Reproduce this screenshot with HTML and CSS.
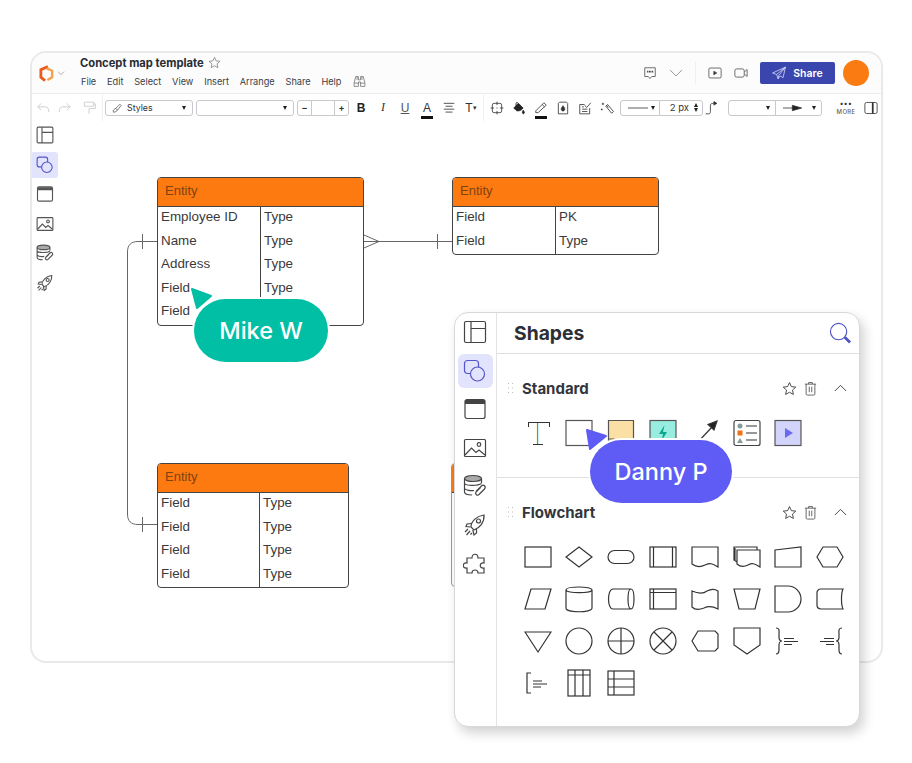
FILE: index.html
```html
<!DOCTYPE html>
<html lang="en">
<head>
  <meta charset="UTF-8">
  <title>Concept map template</title>
  <link rel="stylesheet" href="styles.css">
</head>
<body>
  <!-- Shared icons -->
  <svg class="defs" width="0" height="0">
    <symbol id="i-layout" viewBox="0 0 24 24"><rect x="1.5" y="1.5" width="21" height="21" rx="1.5"/><path d="M8 1.5V22.5M8 8.5H22.5"/></symbol>
    <symbol id="i-shapes" viewBox="0 0 24 24"><rect x="1.5" y="1.5" width="14" height="13" rx="3"/><circle cx="14.5" cy="15" r="7" fill="#e2e3fd"/></symbol>
    <symbol id="i-frame" viewBox="0 0 24 24"><rect x="2" y="2.5" width="20" height="19" rx="2"/><path d="M2 5H22" stroke-width="4"/></symbol>
    <symbol id="i-image" viewBox="0 0 24 24"><rect x="1.5" y="3.5" width="21" height="17" rx="1"/><path d="M2 19L8.500 12L13 16.500L16 14L22 19"/><circle cx="16" cy="8.500" r="1.800"/></symbol>
    <symbol id="i-data" viewBox="0 0 24 24"><ellipse cx="10" cy="4.500" rx="8.500" ry="3" fill="#aaa"/><path d="M1.500 4.500V18C1.500 20 5.500 21 9 21M18.500 4.500V9M1.500 9.500C3 12 15 12 18.500 9.500M1.500 14.500C3 16.500 8 17 11 16.500"/><path d="M13 17.500L18.500 12C20.500 10 23.500 12.500 21.500 15L16 20.500C14.500 22.500 11.500 20 13 18L17.500 13.500"/></symbol>
    <symbol id="i-rocket" viewBox="0 0 24 24"><path d="M8 14C8 8 14 3 21 2C21.500 9 17 15 11 17Z"/><circle cx="15.500" cy="8" r="2"/><path d="M8 10.500L4 11L3 13.500L7.500 14M13.500 16L13.500 20L11 22L9.800 17M5 16L2 19M7 18L3.500 22M9 20L7.500 21.500"/></symbol>
    <symbol id="i-star" viewBox="0 0 24 24"><path d="M12 2.500L15 9L22 9.800L16.800 14.500L18.200 21.500L12 18L5.800 21.500L7.200 14.500L2 9.800L9 9Z"/></symbol>
    <symbol id="i-trash" viewBox="0 0 24 24"><path d="M3 5H21M9 5V2.500H15V5M5 5V21C5 22 6 22.500 7 22.500H17C18 22.500 19 22 19 21V5M10 9V18M14 9V18"/></symbol>
    <symbol id="i-chevron" viewBox="0 0 24 24"><path d="M3 16L12 7L21 16"/></symbol>
    <symbol id="i-grip" viewBox="0 0 7 12"><path d="M1 1h1v1H1zM5 1h1v1H5zM1 5.500h1v1H1zM5 5.500h1v1H5zM1 10h1v1H1zM5 10h1v1H5z"/></symbol>
  </svg>

  <div class="stage">
    <div class="window">
      <header class="topbar">
        <svg class="logo" viewBox="0 0 16 18"><path d="M9.500 1.500L2 5V13L6.500 16.500" fill="none" stroke="#ee5a1c" stroke-width="3"/><path d="M8 3.500L14 6V13L9 16" fill="none" stroke="#f9a04a" stroke-width="2.600"/></svg>
        <svg class="icon icon-xs logo-arrow" viewBox="0 0 24 24"><path d="M3 8L12 17L21 8"/></svg>
        <div class="doc">
          <div class="doc-title">Concept map template
            <svg class="icon title-star"><use href="#i-star"/></svg>
          </div>
          <nav class="menu">
            <span>File</span><span>Edit</span><span>Select</span><span>View</span><span>Insert</span><span>Arrange</span><span>Share</span><span>Help</span>
            <svg class="icon menu-find" viewBox="0 0 24 24"><path d="M5 3H10V9H14V3H19L22 15V21H14V13H10V21H2V15ZM2.500 15H10M14 15H21.500M7.500 3V9M16.500 3V9"/></svg>
          </nav>
        </div>
        <div class="top-actions">
          <svg class="icon top-icon" viewBox="0 0 24 24"><path d="M3 3H21V18H15L12 21.500L9 18H3Z"/><path d="M8 8V11M11 8V11M13.500 8V11M16.500 8V11" stroke-width="2"/></svg>
          <svg class="icon top-icon top-chevron" viewBox="0 0 24 24"><path d="M2 7L12 17L22 7"/></svg>
          <span class="top-sep"></span>
          <svg class="icon top-icon" viewBox="0 0 24 24"><rect x="1.500" y="3.500" width="21" height="17" rx="2"/><path d="M10 9L15 12L10 15Z" fill="#333"/></svg>
          <svg class="icon top-icon" viewBox="0 0 24 24"><rect x="1.500" y="5" width="16" height="14" rx="3"/><path d="M18 10L22.500 6V18L18 14"/></svg>
          <button class="share-btn">
            <svg class="share-plane" viewBox="0 0 24 24"><path d="M23 2L1 12L8 14.500L10.500 22L14 17L19 20ZM8 14.500L23 2L11 17L10.500 22"/></svg>
            Share
          </button>
          <span class="avatar"></span>
        </div>
      </header>

      <div class="toolbar">
        <span class="tool faint"><svg class="icon" viewBox="0 0 24 24"><path d="M3 10H16C20 10 22 13 22 19M3 10L9 4M3 10L9 16"/></svg></span>
        <span class="tool faint"><svg class="icon" viewBox="0 0 24 24"><path d="M21 10H8C4 10 2 13 2 19M21 10L15 4M21 10L15 16"/></svg></span>
        <span class="tool tool-paint faint"><svg class="icon" viewBox="0 0 24 24"><path d="M4 2H20V9H4ZM20 5H23V13H12V22"/></svg></span>
        <span class="tool-sep"></span>
        <div class="field field-styles">
          <svg class="icon field-brush" viewBox="0 0 24 24"><path d="M3 22C2 17 6 14 9 13L13 17C12 20 8 22 3 22ZM9 13L19 3L22 6L13 17"/></svg>
          <span class="field-text">Styles</span><i class="caret"></i>
        </div>
        <div class="field field-font"><i class="caret"></i></div>
        <div class="stepper"><span>−</span><b></b><span>+</span></div>
        <span class="tool tool-first tool-text tool-bold">B</span>
        <span class="tool tool-text tool-italic">I</span>
        <span class="tool tool-text tool-under">U</span>
        <span class="tool tool-text tool-color">A</span>
        <span class="tool"><svg class="icon" viewBox="0 0 24 24"><path d="M3 4H21M6 9H18M3 14H21M6 19H18"/></svg></span>
        <span class="tool tool-text tool-size">T<small>▾</small></span>
        <span class="tool-sep tool-sep-b"></span>
        <span class="tool"><svg class="icon" viewBox="0 0 24 24"><rect x="4" y="4" width="16" height="16" rx="3"/><path d="M12 1V7M12 17V23M1 12H7M17 12H23M11 12H13"/></svg></span>
        <span class="tool"><svg class="icon icon-solid" viewBox="0 0 24 24"><path d="M3 12L11 4L19 12C16 17 9 18 7 16ZM19 16C21 18 22 20 20.500 21.500C19 22.500 17.500 21 18 19Z"/><path d="M7 9V4C7 2 10 2 10 4" fill="none" stroke="#222" stroke-width="1.500"/></svg></span>
        <span class="tool tool-pen"><svg class="icon" viewBox="0 0 24 24"><path d="M3 17L17 3L21 7L7 20H3ZM14 6L18 10"/></svg></span>
        <span class="tool"><svg class="icon" viewBox="0 0 24 24"><path d="M6 2H18L20 4V22H4V4Z"/><path d="M12 8C13.500 10.500 15 12 15 14C15 18 9 18 9 14C9 12 10.500 10.500 12 8Z" fill="#333"/></svg></span>
        <span class="tool"><svg class="icon" viewBox="0 0 24 24"><path d="M3 6H11M3 6V22H20V12M7 14H16M7 18H16M7 10H10M11 7L15 11L22 3"/></svg></span>
        <span class="tool"><svg class="icon" viewBox="0 0 24 24"><path d="M10 9L13 6L23 18L20 21ZM11 7L14 11M5 3V7M3 5H7M3 13V16M1.500 14.500H4.500"/></svg></span>
        <div class="line-group">
          <div class="line-style"><svg class="line-svg" viewBox="0 0 30 6"><path d="M0 3H30"/></svg><i class="caret"></i></div>
          <div class="line-width">2 px<span class="spin"><i class="caret caret-up"></i><i class="caret"></i></span></div>
        </div>
        <span class="tool tool-route"><svg class="icon" viewBox="0 0 24 24"><path d="M3 22H8C11 22 11 20 11 18V7C11 5 13 4 17 4"/><path d="M17 1L22 4L17 7Z" fill="#333"/></svg></span>
        <div class="line-group line-group-ends">
          <div class="end-left"><i class="caret"></i></div>
          <div class="end-right"><svg class="line-svg" viewBox="0 0 30 10"><path d="M0 5H22"/><path d="M14 1L28 5L14 9Z" fill="#222"/></svg><i class="caret"></i></div>
        </div>
        <div class="more"><span class="dots">•••</span><span>MORE</span></div>
        <span class="tool tool-side"><svg class="icon" viewBox="0 0 24 24"><rect x="1.500" y="2.500" width="21" height="19" rx="3"/><path d="M15 2.500V21.500" stroke-width="3"/></svg></span>
      </div>

      <aside class="rail">
        <span class="rail-item"><svg class="icon"><use href="#i-layout"/></svg></span>
        <span class="rail-item active"><svg class="icon"><use href="#i-shapes"/></svg></span>
        <span class="rail-item"><svg class="icon"><use href="#i-frame"/></svg></span>
        <span class="rail-item"><svg class="icon"><use href="#i-image"/></svg></span>
        <span class="rail-item"><svg class="icon"><use href="#i-data"/></svg></span>
        <span class="rail-item"><svg class="icon"><use href="#i-rocket"/></svg></span>
      </aside>
    </div>

    <!-- Diagram on the canvas -->
    <svg class="wires" width="912" height="763" viewBox="0 0 912 763">
      <path d="M157 241.500H138C131 241.500 127.500 245 127.500 252V514C127.500 521 131 524.500 138 524.500H157"/>
      <path d="M142.500 234V249M142.500 517V532"/>
      <path d="M364 241.500H452M437.500 234V249M364 235L379 241.500L364 248"/>
    </svg>

    <div class="entity entity-a">
      <div class="entity-head">Entity</div>
      <div class="entity-row"><span>Employee ID</span><span>Type</span></div>
      <div class="entity-row"><span>Name</span><span>Type</span></div>
      <div class="entity-row"><span>Address</span><span>Type</span></div>
      <div class="entity-row"><span>Field</span><span>Type</span></div>
      <div class="entity-row"><span>Field</span><span></span></div>
    </div>
    <div class="entity entity-b">
      <div class="entity-head">Entity</div>
      <div class="entity-row"><span>Field</span><span>PK</span></div>
      <div class="entity-row"><span>Field</span><span>Type</span></div>
    </div>
    <div class="entity entity-c">
      <div class="entity-head">Entity</div>
      <div class="entity-row"><span>Field</span><span>Type</span></div>
      <div class="entity-row"><span>Field</span><span>Type</span></div>
      <div class="entity-row"><span>Field</span><span>Type</span></div>
      <div class="entity-row"><span>Field</span><span>Type</span></div>
    </div>
    <div class="entity entity-d">
      <div class="entity-head"></div>
      <div class="entity-row"></div>
      <div class="entity-row"></div>
      <div class="entity-row"></div>
      <div class="entity-row"></div>
    </div>

    <!-- Floating shapes panel -->
    <section class="panel">
      <aside class="panel-rail">
        <span class="panel-item"><svg class="icon"><use href="#i-layout"/></svg></span>
        <span class="panel-item active"><svg class="icon"><use href="#i-shapes"/></svg></span>
        <span class="panel-item"><svg class="icon"><use href="#i-frame"/></svg></span>
        <span class="panel-item"><svg class="icon"><use href="#i-image"/></svg></span>
        <span class="panel-item"><svg class="icon"><use href="#i-data"/></svg></span>
        <span class="panel-item"><svg class="icon"><use href="#i-rocket"/></svg></span>
        <span class="panel-item"><svg class="icon" viewBox="0 0 24 24"><path d="M9 6C9 1 15 1 15 6H21V11C16 10 16 17 21 16V21H15C15 17 9 17 9 21H4V16C-1 17 -1 10 4 11V6Z"/></svg></span>
      </aside>
      <div class="panel-main">
        <header class="panel-head">
          <h2>Shapes</h2>
          <svg class="panel-search" viewBox="0 0 24 24"><circle cx="10" cy="10" r="8.500"/><path d="M16.500 16L22 21.500" stroke-width="3"/></svg>
        </header>

        <div class="section section-standard">
          <div class="section-head">
            <svg class="grip"><use href="#i-grip"/></svg>
            <h3>Standard</h3>
            <svg class="icon act act-star"><use href="#i-star"/></svg>
            <svg class="icon act act-trash"><use href="#i-trash"/></svg>
            <svg class="icon act act-chev"><use href="#i-chevron"/></svg>
          </div>
          <div class="shapes">
            <span class="shape shape-text">T</span>
            <span class="shape"><svg viewBox="0 0 28 28"><rect x="1" y="1.500" width="26" height="25" stroke="#555"/></svg></span>
            <span class="shape"><svg viewBox="0 0 28 28"><path d="M1.500 1.500H26.500V26.500H1.500Z" fill="#fbe0a5" stroke="#555"/><path d="M1.500 20H7V26" stroke="#555"/></svg></span>
            <span class="shape"><svg viewBox="0 0 28 28"><rect x="1" y="1.500" width="26" height="25" fill="#98ede0" stroke="#555"/><path d="M15.500 6L10 15H14L12.500 22L18 13H14Z" fill="#0aa88f" stroke="none"/></svg></span>
            <span class="shape"><svg viewBox="0 0 28 28"><path d="M5 25L22 7"/><path d="M26 2L23 11L17 5.500Z" fill="#222"/></svg></span>
            <span class="shape"><svg viewBox="0 0 28 28"><rect x="1" y="1.500" width="26" height="25" rx="2" stroke="#444"/><circle cx="7" cy="7" r="2.500" fill="#8a9a9c" stroke="none"/><rect x="4.500" y="11.500" width="5" height="5" fill="#f47216" stroke="none"/><path d="M7 19L10 24H4Z" fill="#8a9a9c" stroke="none"/><path d="M13 7H24M13 14H24M13 21H24"/></svg></span>
            <span class="shape"><svg viewBox="0 0 28 28"><rect x="1" y="1.500" width="26" height="25" fill="#d3d4fb" stroke="#555"/><path d="M11 9L19 14L11 19Z" fill="#6a6af0" stroke="none"/></svg></span>
          </div>
        </div>

        <div class="section">
          <div class="section-head">
            <svg class="grip"><use href="#i-grip"/></svg>
            <h3>Flowchart</h3>
            <svg class="icon act act-star"><use href="#i-star"/></svg>
            <svg class="icon act act-trash"><use href="#i-trash"/></svg>
            <svg class="icon act act-chev"><use href="#i-chevron"/></svg>
          </div>
          <div class="shapes">
            <span class="shape"><svg viewBox="0 0 28 28"><rect x="1" y="4" width="26" height="20"/></svg></span>
            <span class="shape"><svg viewBox="0 0 28 28"><path d="M14 4L27 14L14 24L1 14Z"/></svg></span>
            <span class="shape"><svg viewBox="0 0 28 28"><rect x="1" y="7.500" width="26" height="13" rx="6.500"/></svg></span>
            <span class="shape"><svg viewBox="0 0 28 28"><rect x="1" y="4" width="26" height="20"/><path d="M4.500 4V24M23.500 4V24"/></svg></span>
            <span class="shape"><svg viewBox="0 0 28 28"><path d="M1 4H27V24C21 20 19 20 14 22C9 24.500 5 24 1 21Z"/></svg></span>
            <span class="shape"><svg viewBox="0 0 28 28"><path d="M4 7H27V24C21 20 19 20 15 22C11 24 8 24.500 4 21ZM4 19L1 17V4H24V7M2 5V17"/></svg></span>
            <span class="shape"><svg viewBox="0 0 28 28"><path d="M1 7L27 4V24H1Z"/></svg></span>
            <span class="shape"><svg viewBox="0 0 28 28"><path d="M7 4H21L27 14L21 24H7L1 14Z"/></svg></span>

            <span class="shape"><svg viewBox="0 0 28 28"><path d="M7 4H27L21 24H1Z"/></svg></span>
            <span class="shape"><svg viewBox="0 0 28 28"><path d="M1 5V23C1 28 27 28 27 23V5M1 5C1 1 27 1 27 5C27 8.500 1 8.500 1 5Z"/></svg></span>
            <span class="shape"><svg viewBox="0 0 28 28"><path d="M6 4H24C28 4 28 24 24 24H6C0 24 0 4 6 4ZM24 4C20 4 20 24 24 24"/></svg></span>
            <span class="shape"><svg viewBox="0 0 28 28"><rect x="1" y="4" width="26" height="20"/><path d="M4.500 4V24M1 7.500H27"/></svg></span>
            <span class="shape"><svg viewBox="0 0 28 28"><path d="M1 6C8 9 12 9 16 6C20 4 24 4 27 6V24C21 21 17 21 13 23C8 25 4 25 1 22Z"/></svg></span>
            <span class="shape"><svg viewBox="0 0 28 28"><path d="M1 4H27L22 24H6Z"/></svg></span>
            <span class="shape"><svg viewBox="0 0 28 28"><path d="M1 1H14A13 13 0 0 1 14 27H1Z"/></svg></span>
            <span class="shape"><svg viewBox="0 0 28 28"><path d="M5 4H27C25 8 25 20 27 24H5C2 24 1 22 1 20V8C1 6 2 4 5 4Z"/></svg></span>

            <span class="shape"><svg viewBox="0 0 28 28"><path d="M1 5H27L14 25Z"/></svg></span>
            <span class="shape"><svg viewBox="0 0 28 28"><circle cx="14" cy="14" r="13"/></svg></span>
            <span class="shape"><svg viewBox="0 0 28 28"><circle cx="14" cy="14" r="13"/><path d="M14 1V27M1 14H27"/></svg></span>
            <span class="shape"><svg viewBox="0 0 28 28"><circle cx="14" cy="14" r="13"/><path d="M5 5L23 23M23 5L5 23"/></svg></span>
            <span class="shape"><svg viewBox="0 0 28 28"><path d="M7 4H24L27 7V21L24 24H7L1 14Z"/></svg></span>
            <span class="shape"><svg viewBox="0 0 28 28"><path d="M1 1H27V18L14 27L1 18Z"/></svg></span>
            <span class="shape"><svg viewBox="0 0 28 28"><path d="M2 1C6 1 5 4 5 8V10C5 12 6 14 8 14C6 14 5 16 5 18V23C5 26 4 27 2 27M10 11.500H20M10 14.500H24M10 17.500H18"/></svg></span>
            <span class="shape"><svg viewBox="0 0 28 28"><path d="M26 1C22 1 23 4 23 8V10C23 12 22 14 20 14C22 14 23 16 23 18V23C23 26 24 27 26 27M8 11.500H18M4 14.500H18M10 17.500H18"/></svg></span>

            <span class="shape"><svg viewBox="0 0 28 28"><path d="M7 4H3V24H7M9 12H18M9 15H23M9 18H17"/></svg></span>
            <span class="shape"><svg viewBox="0 0 28 28"><rect x="3" y="1" width="22" height="26"/><path d="M3 6H25M10 1V27M18 1V27"/></svg></span>
            <span class="shape"><svg viewBox="0 0 28 28"><rect x="1" y="2" width="26" height="24"/><path d="M1 10H27M1 18H27M7 2V26"/></svg></span>
          </div>
        </div>
      </div>
    </section>

    <!-- Collaborator cursors -->
    <svg class="cursor cursor-mike" viewBox="0 0 24 24"><path d="M2 2L21 9L7 21Z"/></svg>
    <div class="badge badge-mike">Mike W</div>
    <svg class="cursor cursor-danny" viewBox="0 0 24 24"><path d="M2 2L21 8L5 21Z"/></svg>
    <div class="badge badge-danny">Danny P</div>
  </div>
</body>
</html>
```

FILE: styles.css
```css
* {
  box-sizing: border-box;
}

body {
  margin: 0;
  background-color: #fff;
  color: #333;
  font-family: Inter, 'Liberation Sans', sans-serif;
}

.defs {
  position: absolute;
}

.stage {
  position: relative;
  width: 912px;
  height: 763px;
  padding: 51px 30px 0;
  overflow: hidden;
}

.icon {
  display: block;
  width: 14px;
  height: 14px;
  fill: none;
  stroke: #333;
  stroke-width: 1.4;
}

/* App window */
.window {
  position: relative;
  width: 853px;
  height: 612px;
  border: 2px solid #e9e9ec;
  border-radius: 16px;
  overflow: hidden;
}

.topbar {
  display: flex;
  align-items: center;
  height: 41px;
  padding-left: 7px;
  background-color: #fcfcfd;
  border-bottom: 1px solid #ececef;
}

.logo {
  width: 15px;
  height: 17px;
}

.logo-arrow {
  width: 8px;
  height: 8px;
  margin-left: 3px;
  stroke: #555;
}

.doc {
  display: flex;
  flex-direction: column;
  align-self: flex-start;
  gap: 6px;
  margin: 3px 0 0 15px;
}

.doc-title {
  display: flex;
  align-items: center;
  gap: 4px;
  font-size: 11.2px;
  font-weight: 700;
  color: #282c33;
  line-height: 12px;
}

.title-star {
  width: 13px;
  height: 13px;
  stroke: #666;
  stroke-width: 1.2;
}

.menu {
  display: flex;
  align-items: center;
  gap: 10.8px;
  font-size: 9.2px;
  line-height: 11px;
  color: #3a3d44;
  padding-left: 1px;
}

.menu-find {
  width: 13px;
  height: 13px;
  margin-left: 1px;
  stroke: #555;
  stroke-width: 1.2;
}

.top-actions {
  display: flex;
  align-items: center;
  margin-left: auto;
}

.top-icon {
  width: 14px;
  height: 14px;
  margin-right: 12px;
  stroke: #444;
  stroke-width: 1.3;
}

.top-chevron {
  stroke: #777;
}

.top-sep {
  width: 1px;
  height: 22px;
  margin-right: 12px;
  background-color: #f0f0f2;
}

.share-btn {
  display: flex;
  align-items: center;
  justify-content: center;
  gap: 7px;
  width: 75px;
  height: 22px;
  border: none;
  border-radius: 2px;
  background-color: #3a46ad;
  color: #fff;
  font-family: inherit;
  font-size: 10.500px;
  font-weight: 600;
}

.share-plane {
  width: 14px;
  height: 14px;
  fill: none;
  stroke: #dfe2ff;
  stroke-width: 1.3;
}

.avatar {
  width: 26px;
  height: 26px;
  margin: 0 12px 0 8px;
  border-radius: 50%;
  background-color: #fa7b12;
}

/* Formatting toolbar */
.toolbar {
  display: flex;
  align-items: center;
  height: 27px;
  background-color: #fff;
}

.tool {
  display: flex;
  align-items: center;
  justify-content: center;
  flex: none;
  width: 22px;
  height: 20px;
}

.faint .icon {
  stroke: #c6c6ca;
}

.tool-paint {
  margin-left: 2px;
}

.tool-sep {
  flex: none;
  width: 1px;
  height: 27px;
  margin: 0 2px;
  background-color: #f0f0f2;
}

.tool-sep-b {
  margin: 0 2px 0 1px;
}

.field {
  display: flex;
  align-items: center;
  flex: none;
  height: 16px;
  border: 1px solid #c9c9cd;
  border-radius: 3px;
  font-size: 8.800px;
}

.field-styles {
  width: 88px;
  padding: 0 6px;
}

.field-brush {
  width: 10px;
  height: 10px;
  stroke-width: 1.5;
}

.field-text {
  margin-left: 5px;
}

.field-font {
  width: 98px;
  margin-left: 3px;
  padding: 0 6px;
}

.caret {
  display: block;
  width: 0;
  height: 0;
  margin-left: auto;
  border-left: 2.5px solid transparent;
  border-right: 2.5px solid transparent;
  border-top: 4px solid #222;
}

.caret-up {
  border-top: none;
  border-bottom: 4px solid #222;
  margin-bottom: 1px;
}

.stepper {
  display: flex;
  flex: none;
  width: 52px;
  height: 16px;
  margin-left: 3px;
  border: 1px solid #c9c9cd;
  border-radius: 3px;
  font-size: 9px;
  font-weight: 700;
  line-height: 14px;
  text-align: center;
}

.stepper span {
  width: 13px;
}

.stepper b {
  flex: 1;
  border-left: 1px solid #c9c9cd;
  border-right: 1px solid #c9c9cd;
}

.tool-first {
  margin-left: 1px;
}

.tool-text {
  font-family: 'Liberation Sans', sans-serif;
  font-size: 12px;
  color: #333;
}

.tool-bold {
  font-weight: 700;
  color: #222;
}

.tool-italic {
  font-family: 'Liberation Serif', serif;
  font-style: italic;
}

.tool-under {
  text-decoration: underline;
  color: #555;
}

.tool-color {
  position: relative;
}

.tool-color::after,
.tool-pen::after {
  content: '';
  position: absolute;
  left: 5px;
  bottom: -1px;
  width: 12px;
  height: 2.5px;
  background-color: #111;
}

.tool-pen {
  position: relative;
}

.tool-size small {
  font-size: 7px;
}

.icon-solid {
  fill: #222;
  stroke: #222;
}

.line-group {
  display: flex;
  flex: none;
  width: 83px;
  height: 16px;
  margin-left: 2px;
  border: 1px solid #c9c9cd;
  border-radius: 3px;
}

.line-style {
  display: flex;
  align-items: center;
  width: 39px;
  padding: 0 4px 0 7px;
  border-right: 1px solid #c9c9cd;
}

.line-svg {
  width: 20px;
  height: 8px;
  fill: none;
  stroke: #333;
  stroke-width: 1.2;
}

.line-width {
  display: flex;
  align-items: center;
  flex: 1;
  padding: 0 4px 0 10px;
  font-size: 9.500px;
  white-space: nowrap;
  gap: 5px;
}

.spin {
  display: flex;
  flex-direction: column;
}

.tool-route {
  width: 16px;
  margin-left: 0;
}

.line-group-ends {
  width: 94px;
  margin-left: 9px;
}

.end-left {
  display: flex;
  align-items: center;
  width: 47px;
  padding-right: 5px;
  border-right: 1px solid #c9c9cd;
}

.end-right {
  display: flex;
  align-items: center;
  flex: 1;
  padding: 0 5px 0 7px;
}

.more {
  display: flex;
  flex-direction: column;
  align-items: center;
  flex: none;
  width: 24px;
  margin-left: 12px;
  font-size: 6px;
  font-weight: 500;
  letter-spacing: 0.3px;
  color: #666;
  line-height: 8px;
}

.dots {
  font-size: 7px;
  color: #333;
  letter-spacing: 0.5px;
}

.tool-side {
  margin-left: 3px;
  width: 20px;
}

/* Left icon rail */
.rail {
  display: flex;
  flex-direction: column;
  align-items: flex-start;
  gap: 3px;
  margin-left: -1px;
  padding-top: 1px;
}

.rail-item {
  display: flex;
  align-items: center;
  justify-content: center;
  width: 27px;
  height: 26.500px;
  border-radius: 3px;
}

.rail-item .icon {
  width: 18px;
  height: 18px;
  stroke-width: 1.5;
  stroke: #555;
}

.active {
  background-color: #e2e3fd;
}

.rail .active .icon,
.panel-rail .active .icon {
  stroke: #5355c9;
}

/* Diagram */
.wires {
  position: absolute;
  left: 0;
  top: 0;
  fill: none;
  stroke: #666;
  stroke-width: 1;
}

.entity {
  position: absolute;
  border: 1px solid #444;
  border-radius: 4px;
  background-color: #fff;
  overflow: hidden;
  font-family: 'Liberation Sans', Arial, sans-serif;
  color: #3a3a3a;
}

.entity-a {
  left: 157px;
  top: 177px;
  width: 207px;
  --col: 102px;
}

.entity-b {
  left: 452px;
  top: 177px;
  width: 207px;
  --col: 102px;
}

.entity-c {
  left: 157px;
  top: 463px;
  width: 192px;
  --col: 101px;
}

.entity-d {
  left: 451px;
  top: 463px;
  width: 192px;
  height: 124px;
  border-color: #999;
  --col: 101px;
}

.entity-head {
  height: 29px;
  padding-left: 7px;
  background-color: #fd7a10;
  border-bottom: 1px solid #444;
  color: #7d4310;
  font-size: 13px;
  line-height: 26px;
}

.entity-row {
  display: grid;
  grid-template-columns: var(--col) 1fr;
  height: 23.600px;
  font-size: 13.400px;
  line-height: 20px;
}

.entity-row span {
  padding-left: 3px;
  white-space: nowrap;
}

.entity-row span + span {
  border-left: 1px solid #444;
}

/* Shapes panel */
.panel {
  position: absolute;
  left: 454px;
  top: 312px;
  display: flex;
  width: 406px;
  height: 415px;
  border: 1px solid #d8d8dc;
  border-radius: 14px;
  background-color: #fff;
  box-shadow: 4px 6px 12px rgba(0, 0, 0, 0.18);
}

.panel-rail {
  display: flex;
  flex-direction: column;
  align-items: center;
  flex: none;
  width: 42px;
  padding: 2px 1px 0 0;
  border-right: 1px solid #e4e4e7;
}

.panel-item {
  display: flex;
  align-items: center;
  justify-content: center;
  width: 35px;
  height: 34px;
  margin-bottom: 4.600px;
  border-radius: 6px;
}

.panel-item .icon {
  width: 24px;
  height: 24px;
  stroke-width: 1.2;
  stroke: #444;
}

.panel-main {
  flex: 1;
  min-width: 0;
}

.panel-head {
  display: flex;
  align-items: center;
  justify-content: space-between;
  height: 41px;
  padding: 0 7px 0 17px;
  border-bottom: 1px solid #dfdfe2;
}

.panel-head h2 {
  margin: 0;
  font-size: 19.300px;
  font-weight: 700;
  color: #2c2f36;
}

.panel-search {
  width: 23px;
  height: 23px;
  fill: none;
  stroke: #4f55c4;
  stroke-width: 1.2;
}

.section {
  padding-top: 24px;
}

.section-standard {
  height: 124px;
  border-bottom: 1px solid #dfdfe2;
}

.section-head {
  display: flex;
  align-items: center;
  height: 20px;
  padding-left: 10px;
}

.grip {
  width: 7px;
  height: 12px;
  fill: #bbb;
}

.section-head h3 {
  flex: 1;
  margin: 0 0 0 8px;
  font-size: 15px;
  font-weight: 700;
  color: #33363c;
}

.act {
  width: 15px;
  height: 15px;
  stroke: #333;
  stroke-width: 1.4;
}

.act-trash {
  margin-left: 6px;
  stroke: #555;
}

.act-chev {
  margin: 0 11px 0 15px;
}

.shapes {
  display: grid;
  grid-template-columns: repeat(8, 41.8px);
  grid-auto-rows: 42px;
  margin-top: 14px;
  padding-left: 19.700px;
}

.shape {
  display: flex;
  align-items: center;
  justify-content: center;
}

.shape svg {
  width: 28px;
  height: 28px;
  fill: none;
  stroke: #333;
  stroke-width: 1.2;
}

.shape-text {
  position: relative;
  font-family: Inter, sans-serif;
  font-size: 31px;
  font-weight: 100;
  color: #222;
}

/* serifs of the text tool glyph */
.shape-text::before {
  content: '';
  position: absolute;
  left: 11px;
  top: 10px;
  width: 20px;
  height: 4px;
  border: 1px solid #333;
  border-bottom: none;
}

.shape-text::after {
  content: '';
  position: absolute;
  left: 16px;
  bottom: 9px;
  width: 10px;
  height: 1px;
  background-color: #333;
}

/* Cursors */
.cursor {
  position: absolute;
  width: 24px;
  height: 24px;
  stroke-linejoin: round;
  stroke-width: 2;
}

.cursor-mike {
  left: 190px;
  top: 287px;
  fill: #00bfa5;
  stroke: #00bfa5;
}

.cursor-danny {
  left: 585px;
  top: 428px;
  fill: #5e5cf5;
  stroke: #5e5cf5;
}

.badge {
  position: absolute;
  display: flex;
  align-items: center;
  justify-content: center;
  height: 63px;
  border-radius: 32px;
  box-shadow: 0 0 0 2px #fff;
  color: #fff;
  font-size: 23.500px;
  font-weight: 500;
}

.badge-mike {
  left: 194px;
  top: 299px;
  width: 134px;
  background-color: #00bfa5;
}

.badge-danny {
  left: 590px;
  top: 440px;
  width: 142px;
  background-color: #5e5cf5;
}
```
